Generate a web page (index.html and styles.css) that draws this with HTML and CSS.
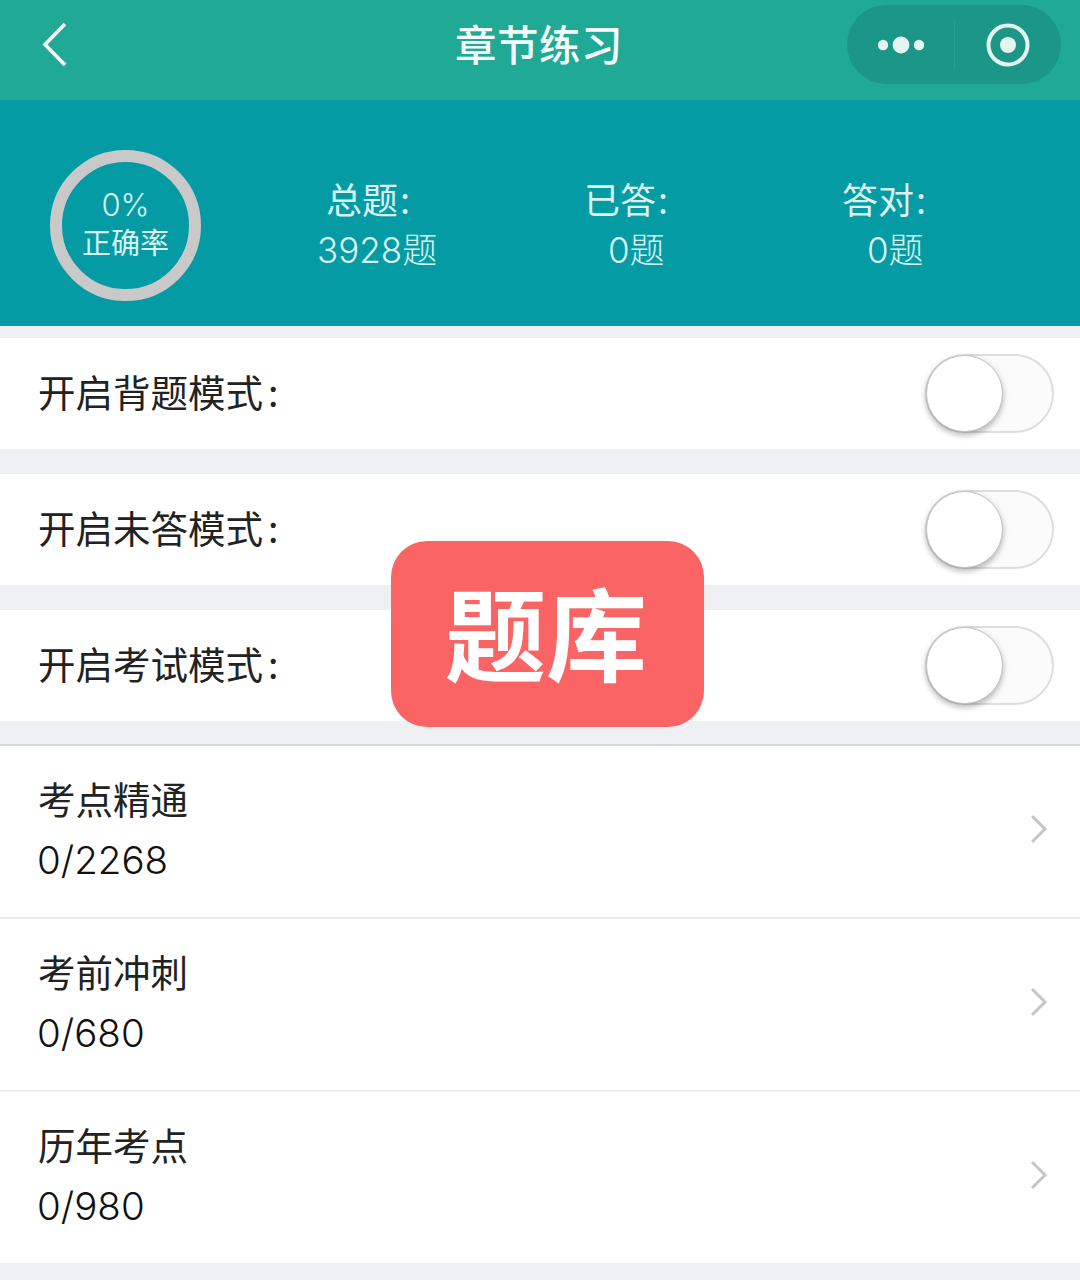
FILE: index.html
```html
<!DOCTYPE html>
<html lang="zh-CN">
<head>
<meta charset="utf-8">
<title>章节练习</title>
<link rel="stylesheet" href="styles.css">
</head>
<body>
<div class="page">
  <header class="nav">
    <svg class="back" width="30" height="48" viewBox="0 0 30 48"><path d="M23 3 L3 23.5 L23 44" fill="none" stroke="#f2fbf9" stroke-width="3.6"/></svg>
    <div class="nav-title">章节练习</div>
    <div class="capsule">
      <div class="cap-part">
        <svg width="48" height="18" viewBox="0 0 48 18"><circle cx="7" cy="9" r="5.2" fill="#e4f4f1"/><circle cx="25" cy="9" r="8.4" fill="#e4f4f1"/><circle cx="43" cy="9" r="5.2" fill="#e4f4f1"/></svg>
      </div>
      <div class="cap-line"></div>
      <div class="cap-part">
        <svg width="44" height="44" viewBox="0 0 44 44"><circle cx="22" cy="22" r="19.5" fill="none" stroke="#e4f4f1" stroke-width="4"/><circle cx="22" cy="22" r="8" fill="#e4f4f1"/></svg>
      </div>
    </div>
  </header>

  <section class="stats">
    <div class="ring"><div class="ring-num">0%</div><div class="ring-label">正确率</div></div>
    <div class="stat stat-a"><div class="stat-k">总题<span class="colon">:</span></div><div class="stat-v">3928题</div></div>
    <div class="stat stat-b"><div class="stat-k">已答<span class="colon">:</span></div><div class="stat-v">0题</div></div>
    <div class="stat stat-c"><div class="stat-k">答对<span class="colon">:</span></div><div class="stat-v">0题</div></div>
  </section>

  <div class="toggles">
    <div class="row"><span class="row-t">开启背题模式<span class="colon">:</span></span><div class="switch"><div class="knob"></div></div></div>
    <div class="row"><span class="row-t">开启未答模式<span class="colon">:</span></span><div class="switch"><div class="knob"></div></div></div>
    <div class="row"><span class="row-t">开启考试模式<span class="colon">:</span></span><div class="switch"><div class="knob"></div></div></div>
  </div>

  <div class="list">
    <div class="item"><div class="item-text"><div class="item-t">考点精通</div><div class="item-n">0/2268</div></div><svg class="chev" width="18" height="30" viewBox="0 0 18 30"><path d="M2 2 L15 15 L2 28" fill="none" stroke="#c6c6c8" stroke-width="3"/></svg></div>
    <div class="item"><div class="item-text"><div class="item-t">考前冲刺</div><div class="item-n">0/680</div></div><svg class="chev" width="18" height="30" viewBox="0 0 18 30"><path d="M2 2 L15 15 L2 28" fill="none" stroke="#c6c6c8" stroke-width="3"/></svg></div>
    <div class="item"><div class="item-text"><div class="item-t">历年考点</div><div class="item-n">0/980</div></div><svg class="chev" width="18" height="30" viewBox="0 0 18 30"><path d="M2 2 L15 15 L2 28" fill="none" stroke="#c6c6c8" stroke-width="3"/></svg></div>
  </div>

  <div class="badge">题库</div>
</div>
</body>
</html>
```
FILE: styles.css
```css
* { box-sizing: border-box; }
html, body { margin: 0; padding: 0; }
body { background: #eff0f4; font-family: "Noto Sans CJK SC", "Noto Sans", sans-serif; }
.page { position: relative; width: 1080px; height: 1280px; overflow: hidden; background: #eff0f4; }

.nav { position: relative; height: 100px; background: #20a995; display: flex; align-items: center; padding: 0 19px 11px 42px; justify-content: space-between; }
.back { display: block; }
.nav-title { position: absolute; left: 0; right: 0; top: 15px; text-align: center; color: #f4fbfa; font-size: 41.5px; line-height: 56px; letter-spacing: 0.5px; font-weight: 500; text-indent: -2px; }
.capsule { width: 214px; height: 79px; border-radius: 40px; background: #1c9686; display: flex; align-items: center; }
.cap-part { flex: 1; display: flex; justify-content: center; align-items: center; }
.cap-line { width: 1px; height: 48px; background: #23a08f; }

.stats { position: relative; height: 226px; background: #059ba4; color: #d9f3f2; }
.ring { position: absolute; left: 50px; top: 50px; width: 151px; height: 151px; border: 12px solid #c9c9c9; border-radius: 50%; text-align: center; }
.ring-num { font-size: 31px; line-height: 36px; margin-top: 25px; font-family: "Inter", sans-serif; font-weight: 300; }
.ring-label { font-size: 29px; line-height: 38px; margin-top: -1px; }
.stat { position: absolute; top: 73px; }
.stat-k { font-size: 36px; line-height: 50px; white-space: nowrap; margin-left: -2px; }
.stat-v { font-size: 35px; line-height: 50px; margin-top: 2px; margin-left: -1px; white-space: nowrap; font-family: "Inter", "Noto Sans CJK SC", sans-serif; font-weight: 300; }
.colon { margin-left: 5px; }
.stat-k .colon { margin-left: 2px; }
.stat-a { left: 318px; width: 122px; }
.stat-a .stat-k { padding-left: 10px; }
.stat-b { left: 586px; width: 82px; }
.stat-b .stat-v { padding-left: 23px; }
.stat-c { left: 844px; width: 84px; }
.stat-c .stat-v { padding-left: 24px; }

.toggles { padding-top: 12px; display: flex; flex-direction: column; gap: 25px; }
.row { height: 111px; background: #fff; display: flex; align-items: center; justify-content: space-between; padding: 0 26px 0 38px; color: #222; }
.row-t { font-size: 37.5px; line-height: 50px; position: relative; top: -3px; }
.switch { position: relative; width: 129px; height: 79px; border-radius: 40px; border: 2px solid #dedede; background: #fbfbfb; }
.knob { position: absolute; left: -1px; top: -1px; width: 77px; height: 77px; border-radius: 50%; background: #fff; border: 1px solid #c4c4c4; box-shadow: 0 3px 6px rgba(0, 0, 0, 0.3); }

.list { margin-top: 23px; border-top: 2px solid #d9d9db; display: flex; flex-direction: column; }
.item { height: 173px; background: #fff; border-bottom: 2px solid #eeeeef; display: flex; align-items: center; justify-content: space-between; padding: 0 32px 6px 38px; color: #222; }
.item:last-child { border-bottom: none; height: 171px; }
.item-text { margin-top: 2px; }
.item-t { font-size: 37.5px; line-height: 58px; }
.item-n { font-size: 38.5px; line-height: 60px; margin-top: 3px; margin-left: -1px; color: #111; font-family: "Inter", "Noto Sans", sans-serif; font-weight: 300; }
.chev { display: block; }

.badge { position: absolute; left: 391px; top: 541px; width: 313px; height: 186px; border-radius: 36px; background: #fb6464; color: #fff; font-size: 101px; font-weight: 700; line-height: 178px; text-align: center; text-indent: -3px; }
```
